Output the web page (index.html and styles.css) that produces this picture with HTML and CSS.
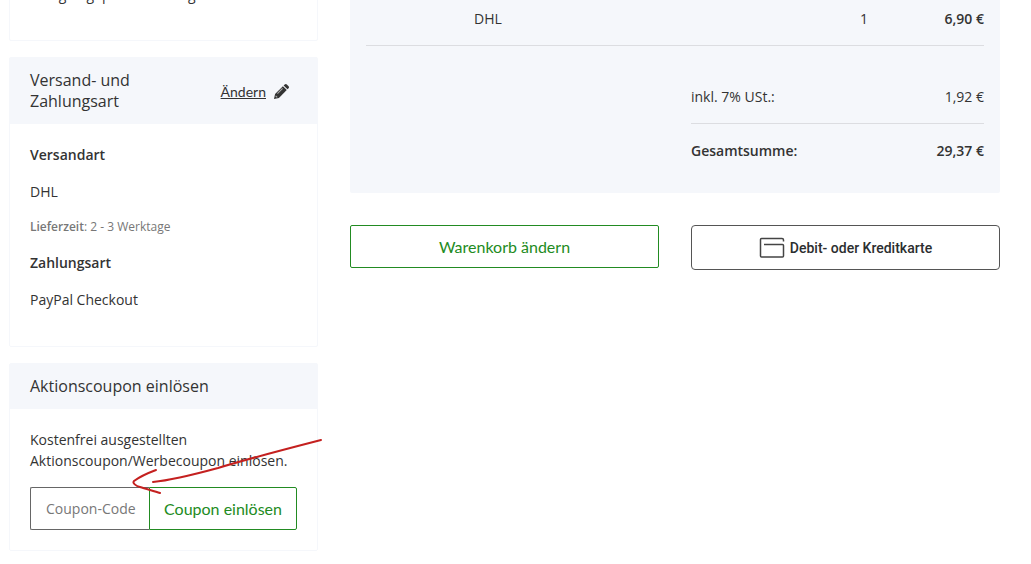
FILE: index.html
```
<!DOCTYPE html>
<html lang="de">
<head>
    <meta charset="UTF-8">
    <meta name="viewport" content="width=device-width, initial-scale=1">
    <title>Bestellung prüfen</title>
    <link rel="stylesheet" href="styles.css">
</head>
<body>
    <main class="checkout">
        <aside class="sidebar">
            <section class="card card-address">
                <p class="address-text">Anlagen geprüft Sendung</p>
            </section>

            <section class="card card-shipping">
                <div class="card-header">
                    <h2>Versand- und Zahlungsart</h2>
                    <a href="#" class="edit-link">
                        <span>Ändern</span>
                        <svg class="pencil" viewBox="0 0 14 14" aria-hidden="true">
                            <path d="M0 14L1 9.400L8.300 2.100L11.900 5.700L4.600 13Z"/>
                            <path d="M9 1.400L10 .4Q11 -.4 12 .4L13.600 2Q14.400 3 13.600 4L12.600 5Z"/>
                            <path class="pencil-light" d="M3.200 8.900L8 4.100M1.500 11L3 12.500"/>
                        </svg>
                    </a>
                </div>
                <div class="card-body">
                    <h3>Versandart</h3>
                    <p>DHL</p>
                    <p class="delivery"><strong>Lieferzeit</strong>: 2 - 3 Werktage</p>
                    <h3>Zahlungsart</h3>
                    <p>PayPal Checkout</p>
                </div>
            </section>

            <section class="card card-coupon">
                <div class="card-header">
                    <h2>Aktionscoupon einlösen</h2>
                </div>
                <div class="card-body">
                    <label for="coupon">Kostenfrei ausgestellten Aktionscoupon/Werbecoupon einlösen.</label>
                    <form class="coupon-form">
                        <input type="text" id="coupon" placeholder="Coupon-Code">
                        <button type="submit">Coupon einlösen</button>
                    </form>
                </div>
                <svg class="arrow" viewBox="0 0 192 56" aria-hidden="true">
                    <path d="M190 2C155 11 120 20 87 30C65 36 43 42 22 44"/>
                    <path d="M25 32C17 35 7 40 3 43C1 45 5 48 9 49C15 51 23 53 29 55"/>
                </svg>
            </section>
        </aside>

        <div class="content">
            <section class="summary">
                <table class="items">
                    <tr>
                        <td class="item-name">DHL</td>
                        <td class="item-count">1</td>
                        <td class="item-price">6,90 €</td>
                    </tr>
                </table>
                <table class="totals">
                    <tr>
                        <td>inkl. 7% USt.:</td>
                        <td class="amount">1,92 €</td>
                    </tr>
                    <tr class="total">
                        <th scope="row">Gesamtsumme:</th>
                        <td class="amount">29,37 €</td>
                    </tr>
                </table>
            </section>

            <div class="actions">
                <button type="button" class="btn-cart">Warenkorb ändern</button>
                <button type="button" class="btn-card">
                    <svg class="card-icon" viewBox="0 0 26 22" aria-hidden="true">
                        <path d="M24.500 4.500V3Q24.500 1.500 23 1.500H2.500Q1.500 1.500 1.500 2.500V19Q1.500 20 2.500 20H23.500Q24.500 20 24.500 19V8.500Q24.500 7.500 23.500 7.500H5"/>
                    </svg>
                    Debit- oder Kreditkarte
                </button>
            </div>
        </div>
    </main>
</body>
</html>
```

FILE: styles.css
```
* {
    box-sizing: border-box;
}
body {
    margin: 0;
    background-color: #fff;
    color: #333;
    font-family: "Open Sans", sans-serif;
    font-size: 14px;
    line-height: 21px;
}
h2, h3, p {
    margin: 0;
}
.checkout {
    display: grid;
    grid-template-columns: minmax(0, 309fr) minmax(0, 650fr);
    gap: 32px;
    align-items: start;
    padding: 0 31px 0 9px;
}
.sidebar {
    display: flex;
    flex-direction: column;
    gap: 16px;
}
.card {
    position: relative;
    border: 1px solid #f5f7fb;
    border-radius: 2px;
}
.card-address {
    margin-top: -17px;
    padding: 0 20px 35px;
}
.card-header {
    display: flex;
    align-items: center;
    justify-content: space-between;
    gap: 16px;
    padding: 12px 28px 12px 20px;
    background-color: #f5f7fb;
}
.card-header h2 {
    font-size: 16px;
    font-weight: 400;
}
.edit-link {
    display: flex;
    flex: none;
    align-items: center;
    gap: 8px;
    color: #333;
    font-family: Lato, sans-serif;
    text-decoration: none;
}
.edit-link span {
    text-decoration: underline;
}
.pencil {
    width: 15px;
    height: 15px;
    fill: #333;
}
.pencil-light {
    fill: none;
    stroke: #aaa;
}
.card-body {
    padding: 20px;
}
.card-shipping .card-header h2 {
    max-width: 120px;
}
.card-shipping .card-body {
    display: flex;
    flex-direction: column;
    gap: 16px;
    padding-bottom: 36px;
}
h3 {
    font-size: 14px;
    font-weight: 600;
}
.delivery {
    color: #777;
    font-size: 12px;
    line-height: 18px;
}
.delivery strong {
    font-weight: 600;
}
.coupon-form {
    display: flex;
    margin-top: 16px;
}
button, input {
    font-family: "Open Sans", sans-serif;
    background-color: #fff;
}
.coupon-form input {
    flex: 1;
    min-width: 0;
    height: 43px;
    padding: 0 0 0 15px;
    border: 1px solid #666;
    border-right: 0;
    border-radius: 2px 0 0 2px;
    font-size: 14px;
}
.coupon-form input::placeholder {
    color: #777;
}
.coupon-form button, .btn-cart {
    height: 43px;
    padding: 0 14px;
    border: 1px solid #228b22;
    border-radius: 2px;
    color: #228b22;
    font-family: Lato, sans-serif;
    font-size: 16px;
    white-space: nowrap;
    cursor: pointer;
}
.coupon-form button {
    border-radius: 0 2px 2px 0;
}
.arrow {
    position: absolute;
    top: 74px;
    left: 121px;
    width: 192px;
    height: 56px;
    fill: none;
    stroke: #c4201f;
    stroke-width: 2;
    stroke-linecap: round;
    pointer-events: none;
}
.summary {
    padding: 8px 16px 32px;
    background-color: #f5f7fb;
    border-radius: 0 0 2px 2px;
}
table {
    border-collapse: collapse;
}
td, th {
    padding: 0;
    text-align: left;
}
.items {
    width: 100%;
    border-bottom: 1px solid #dcdde1;
}
.items td {
    padding-bottom: 16px;
}
.items .item-name {
    padding-left: 108px;
}
.item-count {
    width: 24px;
    text-align: center;
}
.items .item-price {
    width: 108px;
    font-weight: 600;
    text-align: right;
}
.totals {
    width: 50%;
    margin: 40px 0 0 auto;
}
.totals tr:first-child td {
    padding-bottom: 16px;
}
.total {
    border-top: 1px solid #dcdde1;
}
.total td, .total th {
    padding-top: 16px;
    font-weight: 600;
}
.totals .amount {
    text-align: right;
}
.actions {
    display: grid;
    grid-template-columns: 1fr 1fr;
    gap: 32px;
    align-items: start;
    margin-top: 32px;
}
.totals {
    width: calc(50% - 16px);
}
.btn-card {
    display: flex;
    align-items: center;
    justify-content: center;
    gap: 5px;
    height: 45px;
    border: 1px solid #555;
    border-radius: 4px;
    color: #2c2e2f;
    font-family: Roboto, sans-serif;
    font-size: 14px;
    font-weight: 500;
    cursor: pointer;
}
.card-icon {
    width: 26px;
    height: 22px;
    fill: none;
    stroke: #444;
    stroke-width: 1.5;
}
```
